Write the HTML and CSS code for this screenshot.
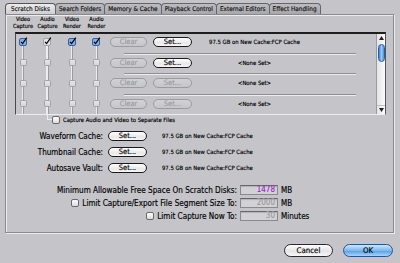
FILE: index.html
```html
<!DOCTYPE html>
<html lang="en">
<head>
    <meta charset="UTF-8">
    <title>Scratch Disks</title>
    <link rel="stylesheet" href="styles.css">
</head>
<body>
    <div class="dialog">
        <!-- tabs -->
        <div class="tabs">
            <div class="tab active">Scratch Disks</div>
            <div class="tab">Search Folders</div>
            <div class="tab">Memory &amp; Cache</div>
            <div class="tab">Playback Control</div>
            <div class="tab">External Editors</div>
            <div class="tab">Effect Handling</div>
        </div>

        <div class="panel">
            <div class="heads">
                <div class="head"><span>Video<br>Capture</span></div>
                <div class="head"><span>Audio<br>Capture</span></div>
                <div class="head"><span>Video<br>Render</span></div>
                <div class="head"><span>Audio<br>Render</span></div>
            </div>

            <!-- disk list -->
            <div class="list">
                <div class="rows">
                    <div class="row">
                        <div class="cells">
                            <div class="cell"><svg class="check" width="9" height="9" viewBox="0 0 9 9"><rect x="0.5" y="1.5" width="7" height="7" rx="1.5" fill="#7fb1ea" stroke="#34609e"/><path d="M2 4.8 L3.6 6.6 L7.8 0.6" fill="none" stroke="#000" stroke-width="1.2"/></svg></div>
                            <div class="cell"><svg class="check" width="9" height="9" viewBox="0 0 9 9"><rect x="0.5" y="1.5" width="7" height="7" rx="1.5" fill="#e4e4e6" stroke="#a4a4a8"/><path d="M2 4.8 L3.6 6.6 L7.8 0.6" fill="none" stroke="#000" stroke-width="1.2"/></svg></div>
                            <div class="cell"><svg class="check" width="9" height="9" viewBox="0 0 9 9"><rect x="0.5" y="1.5" width="7" height="7" rx="1.5" fill="#7fb1ea" stroke="#34609e"/><path d="M2 4.8 L3.6 6.6 L7.8 0.6" fill="none" stroke="#000" stroke-width="1.2"/></svg></div>
                            <div class="cell"><svg class="check" width="9" height="9" viewBox="0 0 9 9"><rect x="0.5" y="1.5" width="7" height="7" rx="1.5" fill="#7fb1ea" stroke="#34609e"/><path d="M2 4.8 L3.6 6.6 L7.8 0.6" fill="none" stroke="#000" stroke-width="1.2"/></svg></div>
                        </div>
                        <div class="btn clear off">Clear</div>
                        <div class="btn set">Set...</div>
                        <div class="path">97.5 GB on New Cache:FCP Cache</div>
                    </div>
                    <div class="sep"></div>
                    <div class="row">
                        <div class="cells">
                            <div class="cell"><span class="tick"></span></div>
                            <div class="cell"><span class="tick"></span></div>
                            <div class="cell"><span class="tick"></span></div>
                            <div class="cell"><span class="tick"></span></div>
                        </div>
                        <div class="btn clear off">Clear</div>
                        <div class="btn set">Set...</div>
                        <div class="path">&lt;None Set&gt;</div>
                    </div>
                    <div class="sep"></div>
                    <div class="row">
                        <div class="cells">
                            <div class="cell"><span class="tick"></span></div>
                            <div class="cell"><span class="tick"></span></div>
                            <div class="cell"><span class="tick"></span></div>
                            <div class="cell"><span class="tick"></span></div>
                        </div>
                        <div class="btn clear off">Clear</div>
                        <div class="btn set off">Set...</div>
                        <div class="path">&lt;None Set&gt;</div>
                    </div>
                    <div class="sep"></div>
                    <div class="row">
                        <div class="cells">
                            <div class="cell"><span class="tick"></span></div>
                            <div class="cell"><span class="tick"></span></div>
                            <div class="cell"><span class="tick"></span></div>
                            <div class="cell"><span class="tick"></span></div>
                        </div>
                        <div class="btn clear off">Clear</div>
                        <div class="btn set off">Set...</div>
                        <div class="path">&lt;None Set&gt;</div>
                    </div>
                </div>
                <div class="scroll">
                    <svg class="arrow" width="5" height="4" viewBox="0 0 5 4"><path d="M0 4 L2.5 0 L5 4 Z" fill="#222"/></svg>
                    <div class="thumb"></div>
                    <div class="track"></div>
                    <svg class="arrow down" width="5" height="4" viewBox="0 0 5 4"><path d="M0 0 L2.5 4 L5 0 Z" fill="#222"/></svg>
                </div>
            </div>

            <div class="separate">
                <span class="elbow"></span>
                <span class="box"></span>
                <span class="separate-label">Capture Audio and Video to Separate Files</span>
            </div>

            <!-- cache locations -->
            <div class="caches">
                <div class="cache">
                    <div class="cache-label">Waveform Cache:</div>
                    <div class="btn set">Set...</div>
                    <div class="cache-path">97.5 GB on New Cache:FCP Cache</div>
                </div>
                <div class="cache">
                    <div class="cache-label">Thumbnail Cache:</div>
                    <div class="btn set">Set...</div>
                    <div class="cache-path">97.5 GB on New Cache:FCP Cache</div>
                </div>
                <div class="cache">
                    <div class="cache-label">Autosave Vault:</div>
                    <div class="btn set">Set...</div>
                    <div class="cache-path">97.5 GB on New Cache:FCP Cache</div>
                </div>
            </div>

            <!-- limits -->
            <div class="limits">
                <div class="limit">
                    <div class="limit-label">Minimum Allowable Free Space On Scratch Disks:</div>
                    <div class="field active">1478</div>
                    <div class="unit">MB</div>
                </div>
                <div class="limit">
                    <div class="limit-label"><span class="box"></span>Limit Capture/Export File Segment Size To:</div>
                    <div class="field">2000</div>
                    <div class="unit">MB</div>
                </div>
                <div class="limit">
                    <div class="limit-label"><span class="box"></span>Limit Capture Now To:</div>
                    <div class="field">30</div>
                    <div class="unit">Minutes</div>
                </div>
            </div>
        </div>
    </div>

    <div class="footer">
        <div class="push cancel">Cancel</div>
        <div class="push ok">OK</div>
    </div>
</body>
</html>
```

FILE: styles.css
```css
* {
    margin: 0;
    padding: 0;
    box-sizing: border-box;
}

body {
    width: 400px;
    height: 263px;
    overflow: hidden;
    background: #c5c5c9;
    font-family: 'DejaVu Sans Condensed', 'DejaVu Sans', sans-serif;
    color: #000;
    -webkit-text-stroke: 0.15px currentColor;
}

.dialog {
    margin: 3px 0 0 5px;
}

/* tabs */
.tabs {
    display: flex;
    height: 11px;
}

.tab {
    font-size: 6.4px;
    line-height: 10px;
    padding: 0 3px;
    margin-right: -1px;
    color: #111;
    white-space: nowrap;
    background: linear-gradient(#bcbcc0, #a8a8ac);
    border: 1px solid #66666a;
    border-bottom: none;
    border-radius: 4px 4px 0 0;
}

.tab.active {
    padding: 0 5px;
    background: linear-gradient(#ebebee, #cfcfd3);
    border-color: #55555a;
}

/* panel */
.panel {
    width: 389px;
    height: 219px;
    border: 1px solid #8a8a8e;
    box-shadow: inset 1px 1px 0 #ececf0, 1px 1px 0 #ececf0;
}

.heads {
    display: flex;
    gap: 10.5px;
    margin: 1px 0 0 10px;
}

.head {
    width: 14px;
    display: flex;
    justify-content: center;
    text-align: center;
    white-space: nowrap;
    font-size: 5.6px;
    line-height: 7px;
}

.list {
    display: flex;
    width: 371px;
    height: 83px;
    margin: 2px 0 0 9px;
    border-top: 2px solid #1e1e1e;
    border-left: 1px solid #4a4a4e;
    border-right: 1px solid #55555a;
    border-bottom: 1px solid #ededf0;
}

.rows {
    flex: 1;
    background: repeating-linear-gradient(90deg, transparent 0 6px, #ededf0 6px 7px, #9a9aa0 7px 8px, transparent 8px 24.5px) 0 8px / 98px 100% no-repeat;
}

.row {
    display: flex;
    align-items: center;
    height: 18.5px;
    padding-bottom: 2px;
}

.cells {
    display: flex;
    gap: 10.5px;
}

.cell {
    width: 14px;
    display: flex;
    justify-content: center;
}

.check {
    display: block;
    margin-top: -1px;
}

.tick {
    display: block;
    width: 7px;
    height: 7px;
    border: 1px solid #a2a2a6;
    border-radius: 1.5px;
    background: linear-gradient(#e6e6e8, #d6d6d9);
}

.sep {
    height: 2px;
    width: 232px;
    margin-left: 108px;
    border-top: 1px solid #8e8e92;
    border-bottom: 1px solid #ededf0;
}

/* buttons */
.btn {
    width: 39px;
    height: 10px;
    margin-left: 6px;
    border: 1px solid #1a1a1a;
    border-radius: 5px;
    background: linear-gradient(#ffffff, #e8e8e8 60%, #f6f6f6);
    font-size: 7.4px;
    line-height: 8px;
    text-align: center;
}

.btn.clear {
    width: 37px;
    margin-left: 6.5px;
}

.btn.off {
    color: #9a9a9e;
    border-color: #9c9ca0;
    background: linear-gradient(#d2d2d6, #c6c6ca);
}

.path {
    width: 125px;
    text-align: center;
    font-size: 5.9px;
    white-space: nowrap;
}

/* scrollbar */
.scroll {
    width: 9px;
    display: flex;
    flex-direction: column;
    align-items: center;
    background: linear-gradient(90deg, #e4e4e6, #fbfbfb);
    border-left: 1px solid #9a9aa0;
}

.arrow {
    display: block;
    margin-top: 2px;
}

.arrow.down {
    margin: 0 0 2px;
}

.thumb {
    width: 7px;
    height: 18px;
    margin-top: 4px;
    border: 1px solid #2d5d9c;
    border-radius: 3.5px;
    background: linear-gradient(90deg, #3d7fd6, #9ccaf6 50%, #4a8ee0);
}

.track {
    flex: 1;
    width: 100%;
    border-bottom: 1px solid #c0c0c4;
    margin-bottom: 2px;
}

/* separate files */
.separate {
    display: flex;
    align-items: center;
    height: 9px;
    margin: 0 0 0 41px;
}

.elbow {
    align-self: flex-start;
    width: 5px;
    height: 5px;
    border-left: 1px solid #ededf0;
    border-bottom: 1px solid #ededf0;
}

.box {
    display: block;
    width: 8px;
    height: 8px;
    border: 1px solid #6a6a6e;
    border-radius: 2px;
    background: linear-gradient(#ffffff, #dcdcde);
}

.separate-label {
    margin-left: 3px;
    font-size: 5.9px;
}

/* caches */
.caches {
    display: flex;
    flex-direction: column;
    gap: 5px;
    margin-top: 6.5px;
}

.cache {
    display: flex;
    align-items: center;
    height: 11px;
}

.cache-label {
    width: 97px;
    text-align: right;
    font-size: 8px;
}

.cache .btn {
    margin-left: 5px;
}

.cache-path {
    margin-left: 15px;
    font-size: 5.9px;
}

/* limits */
.limits {
    display: flex;
    flex-direction: column;
    gap: 2px;
    margin-top: 11px;
}

.limit {
    display: flex;
    align-items: center;
    height: 11px;
}

.limit-label {
    width: 234px;
    padding-right: 3px;
    display: flex;
    justify-content: flex-end;
    align-items: center;
    gap: 3px;
    font-size: 8.1px;
    white-space: nowrap;
}

.field {
    width: 38px;
    height: 10px;
    padding-right: 2px;
    border: 1px solid #8a8a8e;
    border-top-color: #66666a;
    background: #d2d2d6;
    box-shadow: inset 0 1px 1px rgba(0, 0, 0, 0.15);
    font-size: 8px;
    line-height: 8px;
    text-align: right;
    color: #9a9a9e;
}

.field.active {
    color: #9c2cc2;
}

.unit {
    margin-left: 3px;
    font-size: 8px;
}

/* footer */
.footer {
    display: flex;
    justify-content: flex-end;
    gap: 10px;
    padding: 11px 7px 0 0;
}

.push {
    height: 13px;
    border-radius: 7px;
    font-size: 7.8px;
    line-height: 11px;
    text-align: center;
    border: 1px solid #2a2a2e;
    background: linear-gradient(#ffffff, #e4e4e6 55%, #f8f8f8);
}

.cancel {
    width: 49px;
}

.ok {
    width: 50px;
    border-color: #2a5590;
    background: linear-gradient(#cfe6fb, #7db8ee 50%, #5aa2e8 55%, #a8d4fa);
}
```
